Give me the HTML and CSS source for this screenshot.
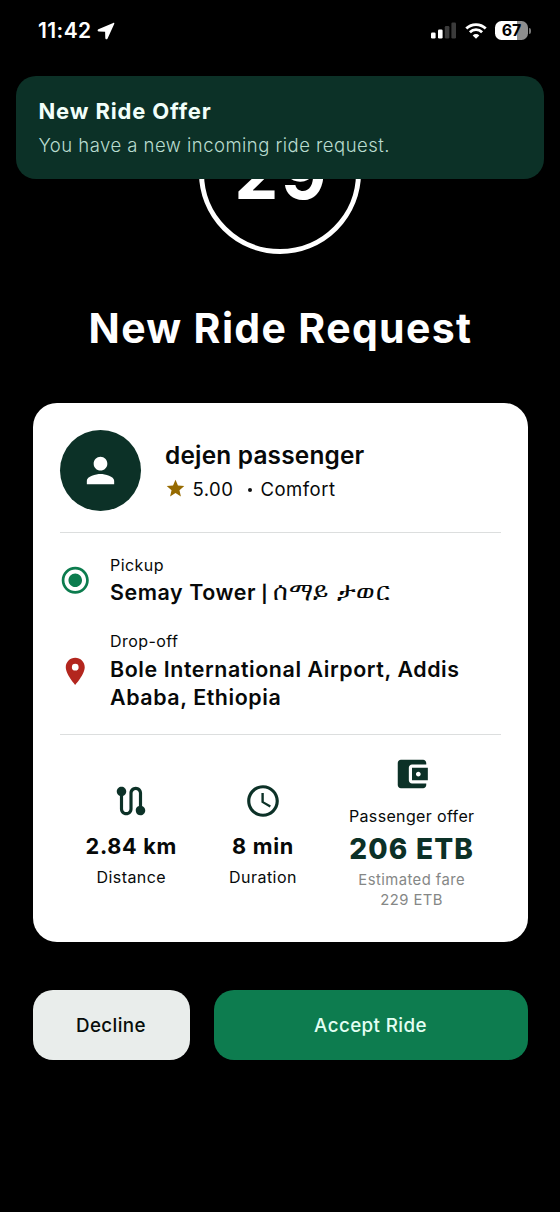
FILE: index.html
```html
<!DOCTYPE html>
<html lang="en">
<head>
<meta charset="utf-8">
<title>New Ride Request</title>
<link rel="stylesheet" href="styles.css">
</head>
<body>
<div class="screen">
  <header class="status">
    <span class="clock">11:42</span>
    <svg class="location" viewBox="0 0 18 18"><path d="M16.200.9 1.400 7.200C.2 7.800.4 9.500 1.900 9.600L8.100 9.800 8.300 16c.1 1.500 1.700 1.700 2.300.4L17.200 2c.4-.9-.1-1.400-1-1.100z"/></svg>
    <div class="status-right">
      <svg class="signal" viewBox="0 0 26 17"><rect x="0" y="10.500" width="4.600" height="6" rx="1.300"/><rect x="7" y="7.500" width="4.600" height="9" rx="1.300"/><rect class="off" x="13.800" y="4" width="4.600" height="12.500" rx="1.300"/><rect class="off" x="20.400" y="0.500" width="4.600" height="16" rx="1.300"/></svg>
      <svg class="wifi" viewBox="0 0 22 16"><path d="M1.300 5.600a13.800 13.800 0 0 1 19.400 0M4.900 9.200a8.700 8.700 0 0 1 12.200 0"/><path class="dot" d="M11 15.700 7.700 12.500a4.600 4.600 0 0 1 6.600 0z"/></svg>
      <div class="battery"><span>67</span></div>
      <i class="battery-tip"></i>
    </div>
  </header>

  <aside class="banner">
    <div class="banner-title">New Ride Offer</div>
    <div class="banner-text">You have a new incoming ride request.</div>
  </aside>

  <div class="timer"><span>29</span></div>
  <h1 class="title">New Ride Request</h1>

  <main class="card">
    <section class="passenger">
      <div class="avatar"><svg viewBox="0 0 24 24"><path d="M12 12c2.210 0 4-1.790 4-4s-1.790-4-4-4-4 1.790-4 4 1.790 4 4 4zm0 2c-2.670 0-8 1.340-8 4v2h16v-2c0-2.660-5.330-4-8-4z"/></svg></div>
      <div class="who">
        <div class="name">dejen passenger</div>
        <div class="rating">
          <svg viewBox="0 0 24 24"><path d="M12 17.270 18.180 21l-1.640-7.030L22 9.240l-7.190-.610L12 2 9.190 8.630 2 9.240l5.460 4.730L5.820 21z"/></svg>
          <span class="score">5.00</span><span class="sep"></span><span class="tier">Comfort</span>
        </div>
      </div>
    </section>

    <section class="route">
      <div class="stop">
        <svg class="pickup" viewBox="0 0 24 24"><path d="M12 7c-2.760 0-5 2.240-5 5s2.240 5 5 5 5-2.240 5-5-2.240-5-5-5zm0-5C6.480 2 2 6.480 2 12s4.480 10 10 10 10-4.480 10-10S17.520 2 12 2zm0 18c-4.420 0-8-3.580-8-8s3.580-8 8-8 8 3.580 8 8-3.580 8-8 8z"/></svg>
        <div>
          <div class="label">Pickup</div>
          <div class="place">Semay Tower <span class="bar">|</span> <span class="ethiopic">ሰማይ ታወር</span></div>
        </div>
      </div>
      <div class="stop">
        <svg class="dropoff" viewBox="0 0 24 24"><path d="M12 2C8.130 2 5 5.130 5 9c0 5.250 7 13 7 13s7-7.750 7-13c0-3.870-3.130-7-7-7zm0 9.500a2.500 2.500 0 0 1 0-5 2.500 2.500 0 0 1 0 5z"/></svg>
        <div>
          <div class="label">Drop-off</div>
          <div class="place address">Bole International Airport, Addis<br>Ababa, Ethiopia</div>
        </div>
      </div>
    </section>

    <section class="stats">
      <div class="stat">
        <svg viewBox="0 0 24 24"><path d="M19 15.180V7c0-2.210-1.790-4-4-4s-4 1.790-4 4v10c0 1.100-.9 2-2 2s-2-.9-2-2V8.820C8.160 8.400 9 7.300 9 6c0-1.660-1.340-3-3-3S3 4.340 3 6c0 1.300.84 2.400 2 2.820V17c0 2.210 1.790 4 4 4s4-1.790 4-4V7c0-1.100.9-2 2-2s2 .9 2 2v8.180A2.996 2.996 0 0 0 18 21c1.660 0 3-1.340 3-3 0-1.300-.84-2.400-2-2.820z"/></svg>
        <div class="value">2.84 km</div>
        <div class="label">Distance</div>
      </div>
      <div class="stat">
        <svg viewBox="0 0 24 24"><path d="M11.990 2C6.470 2 2 6.480 2 12s4.470 10 9.990 10C17.520 22 22 17.520 22 12S17.520 2 11.990 2zM12 20c-4.420 0-8-3.580-8-8s3.580-8 8-8 8 3.580 8 8-3.580 8-8 8zm.5-13H11v6l5.250 3.150.75-1.230-4.500-2.670z"/></svg>
        <div class="value">8 min</div>
        <div class="label">Duration</div>
      </div>
      <div class="stat offer">
        <svg viewBox="0 0 24 24"><path d="M21 18v1c0 1.100-.9 2-2 2H5c-1.110 0-2-.9-2-2V5c0-1.100.89-2 2-2h14c1.100 0 2 .9 2 2v1h-9c-1.110 0-2 .9-2 2v8c0 1.100.89 2 2 2h9zm-9-2h10V8H12v8zm4-2.500c-.83 0-1.500-.67-1.500-1.500s.67-1.500 1.500-1.500 1.500.67 1.500 1.500-.67 1.500-1.500 1.500z"/></svg>
        <div class="label">Passenger offer</div>
        <div class="price">206 ETB</div>
        <div class="estimate">Estimated fare<br>229 ETB</div>
      </div>
    </section>
  </main>

  <footer class="actions">
    <button class="decline">Decline</button>
    <button class="accept">Accept Ride</button>
  </footer>
</div>
</body>
</html>
```
FILE: styles.css
```css
* { box-sizing: border-box; }
body {
  margin: 0;
  background: #000;
  color: #070909;
  font-family: Inter, "Noto Sans", sans-serif;
}
svg { display: block; flex: none; fill: currentColor; }
.screen {
  position: relative;
  width: 560px;
  height: 1212px;
  overflow: hidden;
  background: #000;
}

.status {
  display: flex;
  align-items: center;
  height: 61px;
  padding: 0 29px 0 38px;
  color: #fff;
}
.clock { font-size: 21px; font-weight: 600; letter-spacing: .4px; }
.location { width: 18px; height: 18px; margin-left: 5px; }
.status-right { display: flex; align-items: center; margin-left: auto; }
.signal { width: 26px; height: 17px; }
.signal .off { fill: #3b3b3b; }
.wifi { width: 22px; height: 16px; margin-left: 8px; }
.wifi path { fill: none; stroke: #fff; stroke-width: 2.800px; }
.wifi .dot { fill: #fff; stroke: none; }
.battery {
  width: 33px;
  height: 19px;
  margin-left: 8px;
  border-radius: 6.500px;
  background: linear-gradient(90deg, #fff 67%, #8e8e8e 67%);
  color: #000;
  font-size: 16px;
  font-weight: 700;
  line-height: 19px;
  text-align: center;
}
.battery-tip { width: 2px; height: 6px; margin-left: 1px; border-radius: 0 2px 2px 0; background: #777; }

.banner {
  position: absolute;
  z-index: 1;
  top: 76px;
  left: 16px;
  width: 528px;
  height: 102.500px;
  padding: 20px 22.500px;
  border-radius: 20px;
  background: #0c3127;
}
.banner-title { color: #f2fffa; font-size: 22px; font-weight: 700; line-height: 30px; letter-spacing: .85px; }
.banner-text { color: #b9dccf; font-size: 18.500px; font-weight: 300; line-height: 30px; letter-spacing: .47px; margin-top: 4px; }

.timer {
  display: flex;
  align-items: center;
  justify-content: center;
  width: 162px;
  height: 162px;
  margin: 31px auto 0;
  padding-left: 4px;
  border: 5.500px solid #fff;
  border-radius: 50%;
  color: #fff;
  font-size: 70px;
  font-weight: 700;
  letter-spacing: 3px;
}
.title {
  margin: 48px 0 0;
  padding-left: 1px;
  color: #fff;
  font-size: 41px;
  font-weight: 700;
  line-height: 52px;
  letter-spacing: 1.350px;
  text-align: center;
}

.card {
  height: 539px;
  margin: 48.500px 32.500px 0;
  padding: 27px;
  border-radius: 24px;
  background: #fff;
}
.passenger { display: flex; height: 103px; border-bottom: 1.400px solid #dcdede; }
.avatar {
  display: grid;
  place-items: center;
  width: 81px;
  height: 81px;
  border-radius: 50%;
  background: #0c3127;
  color: #fff;
}
.avatar svg { width: 41px; height: 41px; }
.who { padding: 8px 0 0 24.500px; }
.name { font-size: 24.400px; font-weight: 600; line-height: 34px; letter-spacing: .2px; }
.rating { display: flex; align-items: center; font-size: 18.500px; line-height: 34px; letter-spacing: .5px; }
.rating svg { width: 21px; height: 21px; margin-left: -.500px; color: #966a00; }
.score { margin-left: 7px; }
.sep { width: 4px; height: 4px; margin: 2px 8.500px 0 14.500px; border-radius: 50%; background: #111; }

.route {
  display: flex;
  flex-direction: column;
  gap: 22px;
  height: 202px;
  padding-top: 20px;
  border-bottom: 1.400px solid #dcdede;
}
.stop { display: flex; align-items: center; gap: 18px; }
.stop svg { width: 32.500px; height: 32.500px; margin: 1px .300px 0 -.300px; }
.pickup { color: #0c7c4e; }
.dropoff { color: #b3261e; }
.label { font-size: 16px; line-height: 24px; letter-spacing: .45px; }
.place { height: 29.400px; margin-top: 1px; font-size: 21.400px; font-weight: 600; line-height: 28.400px; letter-spacing: .59px; }
.place.address { height: auto; margin-top: 2px; }
.place .bar { margin: 0 -1px; font-size: 17px; font-weight: 700; }
.place .ethiopic { font-size: 24.500px; font-weight: 400; line-height: 20px; letter-spacing: .7px; }

.stats { display: flex; justify-content: space-around; padding-top: 20px; }
.stat { display: flex; flex-direction: column; align-items: center; padding-top: 27px; }
.stat svg { width: 38px; height: 38px; color: #0c3127; }
.value { margin: 11px 0 4px; font-size: 21.700px; font-weight: 650; line-height: 30px; letter-spacing: .7px; }
.offer { padding-top: 0; }
.offer .label { margin-top: 11px; letter-spacing: .35px; }
.price { margin: 4px 0 4px; color: #0c3127; font-size: 28px; font-weight: 800; line-height: 34px; letter-spacing: 1.200px; }
.estimate { color: #858786; font-size: 14.800px; line-height: 20.400px; letter-spacing: .45px; text-align: center; }

.actions { display: grid; grid-template-columns: 1fr 2fr; gap: 24px; margin: 48px 32.500px 0; }
.actions button {
  height: 70px;
  padding: 1px 0 0;
  border: 0;
  border-radius: 20px;
  font-family: inherit;
  font-size: 18.800px;
  font-weight: 530;
  letter-spacing: .4px;
}
.actions .decline { background: #e9edeb; color: #070d0a; }
.actions .accept { background: #0d7c4f; color: #e3fff3; }
```
